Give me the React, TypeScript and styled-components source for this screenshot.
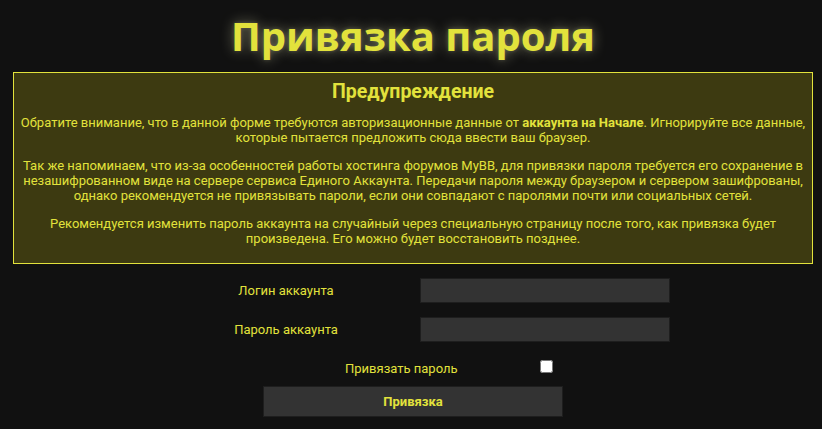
import styled, { createGlobalStyle } from "styled-components";

const GlobalStyle = createGlobalStyle`
  html, body {
    margin: 0;
    padding: 0;
    background: #111111;
  }
  body {
    font-family: Roboto, "Liberation Sans", sans-serif;
    color: #e2e23c;
  }
`;

const Page = styled.div`
  padding: 0 9px 0 13px;
`;

const Title = styled.h1`
  margin: 8px 0 8px;
  font-family: "Open Sans", "DejaVu Sans", sans-serif;
  font-size: 40px;
  font-weight: 700;
  line-height: 56px;
  text-align: center;
  color: #e2e23c;
  text-shadow: 0 0 14px rgba(255, 255, 200, 0.4), 0 0 4px rgba(255, 255, 190, 0.2);
`;

const Warning = styled.div`
  border: 1px solid #e2e23c;
  background: #3d3a11;
  padding: 7px 2px 4px;
  text-align: center;
`;

const WarningTitle = styled.h2`
  margin: 0 0 12px;
  font-size: 19.5px;
  font-weight: 700;
  line-height: 23px;
`;

const Para = styled.p`
  margin: 13px 0;
  font-size: 13px;
  line-height: 15px;
  &:first-of-type {
    margin-top: 0;
  }
`;

const Form = styled.form`
  display: flex;
  flex-direction: column;
  padding-top: 14px;
`;

const FieldRow = styled.div`
  display: grid;
  grid-template-columns: 250px 250px;
  column-gap: 9px;
  align-items: center;
  margin-left: 148px;
  margin-bottom: 14px;
`;

const Label = styled.label`
  font-size: 13px;
  text-align: center;
`;

const Input = styled.input`
  box-sizing: border-box;
  height: 25px;
  width: 250px;
  background: #333333;
  border: 1px solid #1e1e1e;
  color: #e2e23c;
  font-family: inherit;
  outline: none;
`;

const CheckRow = styled.div`
  display: flex;
  align-items: center;
  margin-left: 332px;
  height: 16px;
  margin-top: 4px;
`;

const CheckLabel = styled.label`
  font-size: 13px;
  width: 195px;
  text-align: left;
`;

const Check = styled.input`
  margin: 0;
  width: 13px;
  height: 13px;
  position: relative;
  top: -2px;
`;

const Submit = styled.button`
  align-self: flex-start;
  box-sizing: border-box;
  margin: 10px 0 0 250px;
  width: 300px;
  height: 31px;
  background: #333333;
  border: 1px solid #1e1e1e;
  color: #e2e23c;
  font-family: Roboto, "Liberation Sans", sans-serif;
  font-size: 13px;
  font-weight: 700;
`;

export default function App() {
  return (
    <Page>
      <GlobalStyle />
      <Title>Привязка пароля</Title>
      <Warning>
        <WarningTitle>Предупреждение</WarningTitle>
        <Para>
          Обратите внимание, что в данной форме требуются авторизационные данные от{" "}
          <b>аккаунта на Начале</b>. Игнорируйте все данные, которые пытается предложить сюда
          ввести ваш браузер.
        </Para>
        <Para>
          Так же напоминаем, что из-за особенностей работы хостинга форумов MyBB, для привязки
          пароля требуется его сохранение в незашифрованном виде на сервере сервиса Единого
          Аккаунта. Передачи пароля между браузером и сервером зашифрованы, однако рекомендуется
          не привязывать пароли, если они совпадают с паролями почти или социальных сетей.
        </Para>
        <Para>
          Рекомендуется изменить пароль аккаунта на случайный через специальную страницу после
          того, как привязка будет произведена. Его можно будет восстановить позднее.
        </Para>
      </Warning>
      <Form onSubmit={(e) => e.preventDefault()}>
        <FieldRow>
          <Label htmlFor="login">Логин аккаунта</Label>
          <Input id="login" type="text" />
        </FieldRow>
        <FieldRow>
          <Label htmlFor="pass">Пароль аккаунта</Label>
          <Input id="pass" type="password" />
        </FieldRow>
        <CheckRow>
          <CheckLabel htmlFor="bind">Привязать пароль</CheckLabel>
          <Check id="bind" type="checkbox" />
        </CheckRow>
        <Submit type="submit">Привязка</Submit>
      </Form>
    </Page>
  );
}
